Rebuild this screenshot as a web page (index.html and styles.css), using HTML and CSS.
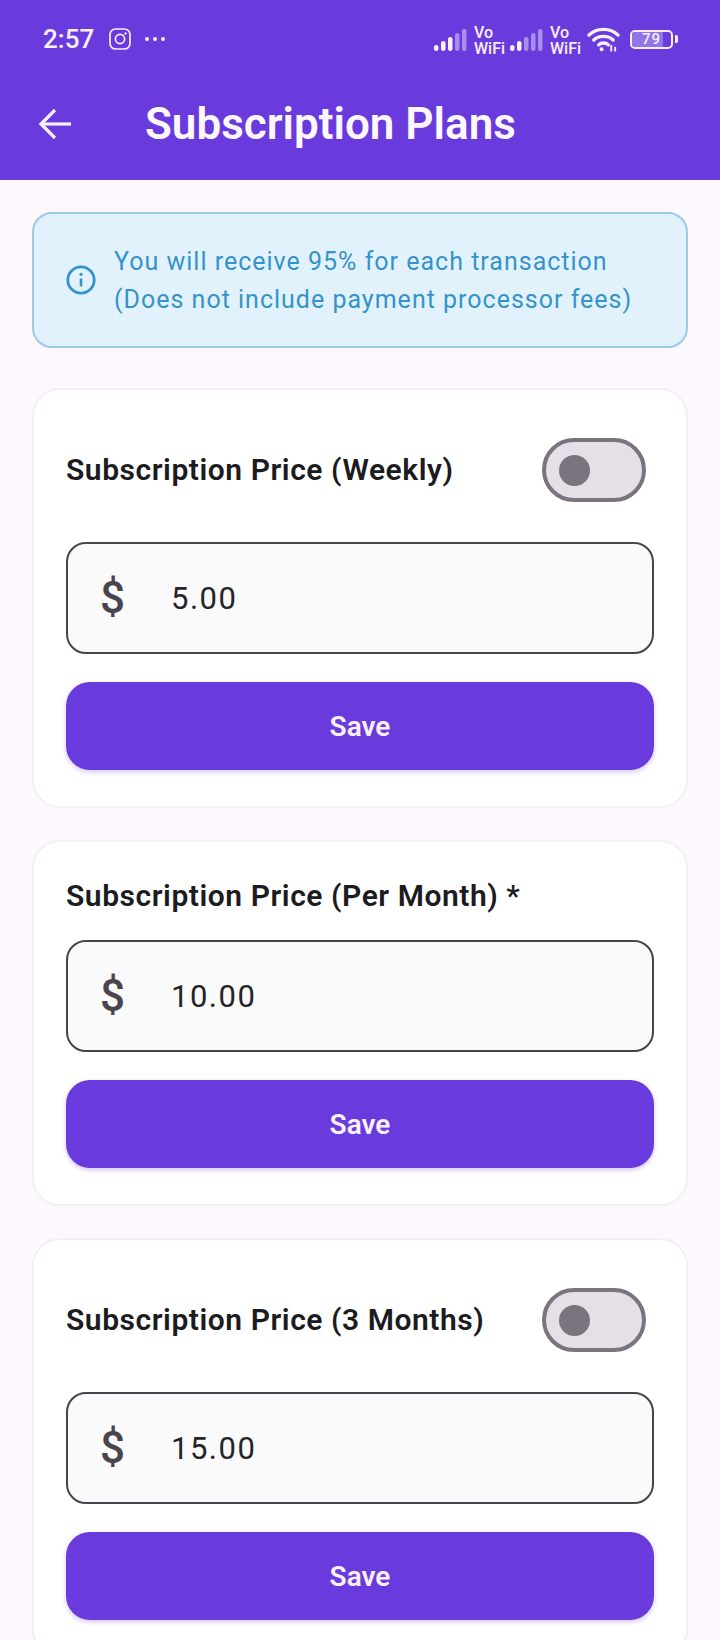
FILE: index.html

```html
<!DOCTYPE html>
<html lang="en">
<head>
    <meta charset="UTF-8">
    <meta name="viewport" content="width=device-width, initial-scale=1.0">
    <title>Subscription Plans</title>
    <link rel="stylesheet" href="styles.css">
</head>
<body>
    <header class="app-header">
        <!-- Status bar -->
        <div class="status-bar">
            <div class="status-left">
                <span class="status-time">2:57</span>
                <svg class="icon-insta" viewBox="0 0 22 22" fill="none" stroke="currentColor">
                    <rect x="1" y="1" width="20" height="20" rx="5.5" stroke-width="1.7"/>
                    <circle cx="11" cy="11" r="4.6" stroke-width="1.7"/>
                    <circle cx="16.5" cy="5.5" r="1.2" fill="currentColor" stroke="none"/>
                </svg>
                <svg class="icon-more" viewBox="0 0 22 6" fill="currentColor">
                    <circle cx="3" cy="3" r="2"/>
                    <circle cx="11" cy="3" r="2"/>
                    <circle cx="19" cy="3" r="2"/>
                </svg>
            </div>
            <div class="status-right">
                <svg class="icon-signal" viewBox="0 0 34 22" fill="currentColor">
                    <rect x="0" y="16" width="4.500" height="6" rx="2.200"/>
                    <rect x="7" y="12" width="4.500" height="10" rx="2.200"/>
                    <rect x="14" y="8" width="4.500" height="14" rx="2.200"/>
                    <rect x="21" y="4" width="4.500" height="18" rx="2.200" opacity="0.45"/>
                    <rect x="28" y="0" width="4.500" height="22" rx="2.200" opacity="0.45"/>
                </svg>
                <span class="vowifi">Vo<br>WiFi</span>
                <svg class="icon-signal" viewBox="0 0 34 22" fill="currentColor">
                    <rect x="0" y="16" width="4.500" height="6" rx="2.200"/>
                    <rect x="7" y="12" width="4.500" height="10" rx="2.200"/>
                    <rect x="14" y="8" width="4.500" height="14" rx="2.200" opacity="0.45"/>
                    <rect x="21" y="4" width="4.500" height="18" rx="2.200" opacity="0.45"/>
                    <rect x="28" y="0" width="4.500" height="22" rx="2.200" opacity="0.45"/>
                </svg>
                <span class="vowifi">Vo<br>WiFi</span>
                <svg class="icon-wifi" viewBox="0 0 34 26" fill="none" stroke="currentColor" stroke-width="3.400" stroke-linecap="round">
                    <path d="M2 9C10 1 24 1 32 9"/>
                    <path d="M7 14C12 9 22 9 27 14"/>
                    <path d="M12 19C14.500 16.500 19.500 16.500 22 19"/>
                    <circle cx="15" cy="23.500" r="2" fill="currentColor" stroke="none"/>
                    <path d="M25 20V25M29 22V25" stroke-width="2"/>
                </svg>
                <div class="battery">
                    <div class="battery-body"><span class="battery-fill"></span><span class="battery-num">79</span></div>
                    <span class="battery-tip"></span>
                </div>
            </div>
        </div>

        <!-- Toolbar -->
        <div class="toolbar">
            <svg class="icon-back" viewBox="0 0 34 32" fill="none" stroke="currentColor" stroke-width="3.200">
                <path d="M33 16H3"/>
                <path d="M17 2L3 16L17 30"/>
            </svg>
            <h1>Subscription Plans</h1>
        </div>
    </header>

    <main class="content">
        <div class="info-box">
            <svg class="icon-info" viewBox="0 0 30 30" fill="none" stroke="currentColor">
                <circle cx="15" cy="15" r="13.200" stroke-width="2.800"/>
                <path d="M15 13.500V21.500" stroke-width="2.600"/>
                <circle cx="15" cy="9.300" r="1.600" fill="currentColor" stroke="none"/>
            </svg>
            <p>You will receive 95% for each transaction<br>(Does not include payment processor fees)</p>
        </div>

        <section class="plan-card has-toggle">
            <div class="plan-head">
                <h2>Subscription Price (Weekly)</h2>
                <div class="toggle"><span class="toggle-knob"></span></div>
            </div>
            <div class="price-field">
                <span class="price-symbol">$</span>
                <span class="price-value">5.00</span>
            </div>
            <button class="save-btn">Save</button>
        </section>

        <section class="plan-card">
            <div class="plan-head">
                <h2>Subscription Price (Per Month) *</h2>
            </div>
            <div class="price-field">
                <span class="price-symbol">$</span>
                <span class="price-value">10.00</span>
            </div>
            <button class="save-btn">Save</button>
        </section>

        <section class="plan-card has-toggle">
            <div class="plan-head">
                <h2>Subscription Price (3 Months)</h2>
                <div class="toggle"><span class="toggle-knob"></span></div>
            </div>
            <div class="price-field">
                <span class="price-symbol">$</span>
                <span class="price-value">15.00</span>
            </div>
            <button class="save-btn">Save</button>
        </section>
    </main>
</body>
</html>
```

FILE: styles.css

```css
* {
    margin: 0;
    padding: 0;
    box-sizing: border-box;
}

html, body {
    height: 1640px;
    overflow: hidden;
}

body {
    font-family: 'Roboto', sans-serif;
    background: #fcf8fe;
    color: #1c1b1f;
}

/* Header */
.app-header {
    height: 180px;
    background: #6a3bdc;
    color: #f8effc;
    display: flex;
    flex-direction: column;
}

.status-bar {
    height: 76px;
    padding: 2px 42px 0 43px;
    display: flex;
    align-items: center;
    justify-content: space-between;
}

.status-left,
.status-right {
    display: flex;
    align-items: center;
}

.status-time {
    font-size: 26px;
    font-weight: 500;
    line-height: 1;
}

.icon-insta {
    width: 22px;
    height: 22px;
    margin-left: 15px;
}

.icon-more {
    width: 22px;
    height: 6px;
    margin-left: 13px;
}

.icon-signal {
    width: 34px;
    height: 22px;
    margin-top: 2px;
}

.vowifi {
    width: 30px;
    margin: 3px 6px 0;
    font-size: 16px;
    font-weight: 500;
    line-height: 16px;
    white-space: nowrap;
}

.icon-wifi {
    width: 33px;
    height: 26px;
    margin-left: 1px;
}

.battery {
    display: flex;
    align-items: center;
    margin-left: 10px;
}

.battery-body {
    position: relative;
    width: 43px;
    height: 19px;
    border: 2px solid #f8effc;
    border-radius: 5px;
    overflow: hidden;
    display: flex;
    align-items: center;
    justify-content: center;
}

.battery-fill {
    position: absolute;
    left: 0;
    top: 0;
    bottom: 0;
    width: 79%;
    background: #9076e6;
}

.battery-num {
    position: relative;
    font-size: 15px;
    font-weight: 500;
    letter-spacing: 1px;
    line-height: 1;
}

.battery-tip {
    width: 3px;
    height: 8px;
    margin-left: 2px;
    background: #f8effc;
    border-radius: 0 2px 2px 0;
}

.toolbar {
    flex: 1;
    padding: 0 0 8px 38px;
    display: flex;
    align-items: center;
}

.icon-back {
    width: 34px;
    height: 32px;
}

.toolbar h1 {
    margin-left: 73px;
    font-size: 44px;
    font-weight: 600;
    line-height: 1;
    color: #fdf8ff;
}

/* Content */
.content {
    padding: 32px 32px 0;
    display: flex;
    flex-direction: column;
}

.info-box {
    height: 136px;
    padding: 0 20px 0 32px;
    background: #e1f2fc;
    border: 2px solid #9ccbe6;
    border-radius: 20px;
    display: flex;
    align-items: center;
    color: #3593c9;
}

.icon-info {
    width: 30px;
    height: 30px;
    flex-shrink: 0;
}

.info-box p {
    margin: 2px 0 0 18px;
    font-size: 25px;
    line-height: 38px;
    letter-spacing: 1px;
}

.plan-card {
    margin-top: 32px;
    padding: 22px 32px 36px;
    background: #fff;
    border: 2px solid #f3eff5;
    border-radius: 28px;
}

.info-box + .plan-card {
    margin-top: 40px;
}

.plan-card.has-toggle {
    padding-top: 48px;
}

.plan-head {
    min-height: 64px;
    padding-right: 8px;
    display: flex;
    align-items: center;
    justify-content: space-between;
}

.plan-card.has-toggle .plan-head {
    margin-bottom: 40px;
}

.plan-card:not(.has-toggle) .plan-head {
    margin-bottom: 12px;
}

.plan-head h2 {
    font-size: 30px;
    font-weight: 600;
    line-height: 1;
    letter-spacing: 0.55px;
    color: #1c1b1f;
}

.toggle {
    width: 104px;
    height: 64px;
    padding-left: 13px;
    background: #e5e0e8;
    border: 4px solid #79747e;
    border-radius: 32px;
    display: flex;
    align-items: center;
}

.toggle-knob {
    width: 31px;
    height: 31px;
    border-radius: 50%;
    background: #79747e;
}

.price-field {
    height: 112px;
    padding: 0 32px;
    background: #fafafa;
    border: 2px solid #46454b;
    border-radius: 20px;
    display: flex;
    align-items: center;
}

.price-symbol {
    width: 71px;
    font-size: 44px;
    font-weight: 500;
    line-height: 1;
    color: #49454f;
}

.price-value {
    font-size: 31px;
    line-height: 1;
    letter-spacing: 1.5px;
    color: #252429;
}

.save-btn {
    display: block;
    width: 100%;
    height: 88px;
    margin-top: 28px;
    border: none;
    border-radius: 24px;
    background: #6a3bdc;
    color: #f9f0fd;
    font-family: 'Roboto', sans-serif;
    font-size: 28px;
    font-weight: 600;
    box-shadow: 0 2px 5px rgba(106, 59, 220, 0.3);
}
```
